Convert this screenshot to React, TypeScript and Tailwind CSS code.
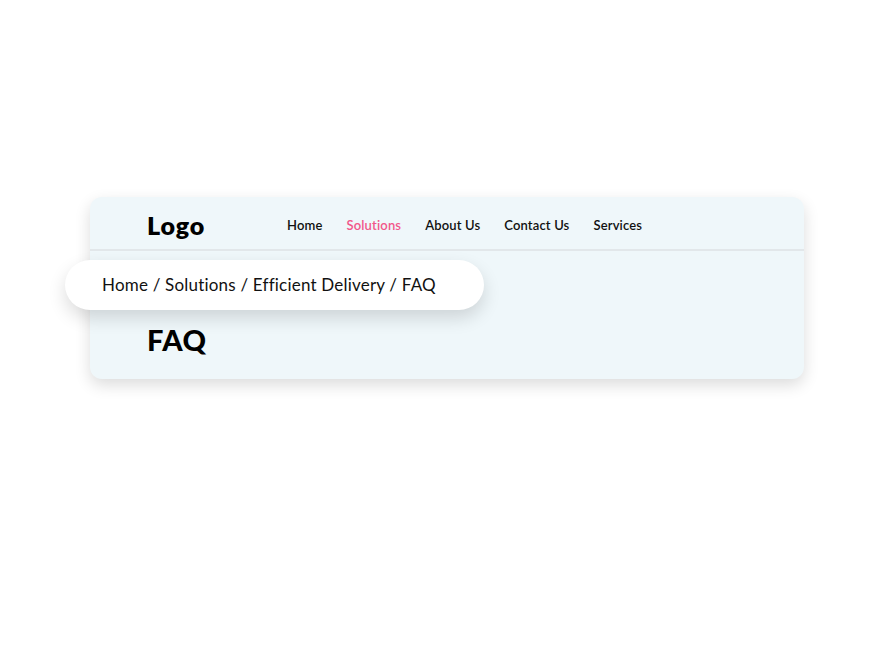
import React from "react";

export default function App() {
  const nav = ["Home", "Solutions", "About Us", "Contact Us", "Services"];
  return (
    <div className="min-h-[667px] w-full bg-white pt-[197px] font-['Lato',sans-serif]">
      <div className="ml-[90px] w-[714px] h-[182px] rounded-[12px] bg-[#eff7fa] shadow-[0_6px_16px_rgba(0,0,0,0.14)] flex flex-col">
        <div className="h-[54px] flex items-center border-b-2 border-[#e2e7ea] pl-[57px] pt-[5px]">
          <div className="w-[140px] text-[25px] tracking-[0.8px] font-extrabold text-black leading-none">Logo</div>
          <nav className="flex items-center gap-[24px]">
            {nav.map((n) => (
              <span
                key={n}
                className={
                  "text-[13px] tracking-[0.15px] font-semibold leading-none " +
                  (n === "Solutions" ? "text-[#f2578a]" : "text-[#111]")
                }
              >
                {n}
              </span>
            ))}
          </nav>
        </div>
        <div className="mt-[9px] -ml-[25px] w-[419px] h-[50px] rounded-full bg-white shadow-[0_8px_18px_rgba(0,0,0,0.14)] flex items-center pl-[37px] pb-[1px]">
          <span className="text-[17px] tracking-[0.2px] text-[#111] leading-none">Home / Solutions / Efficient Delivery / FAQ</span>
        </div>
        <div className="pl-[57px] mt-[15px] text-[29px] tracking-[0.6px] font-black text-black leading-none">FAQ</div>
      </div>
    </div>
  );
}
